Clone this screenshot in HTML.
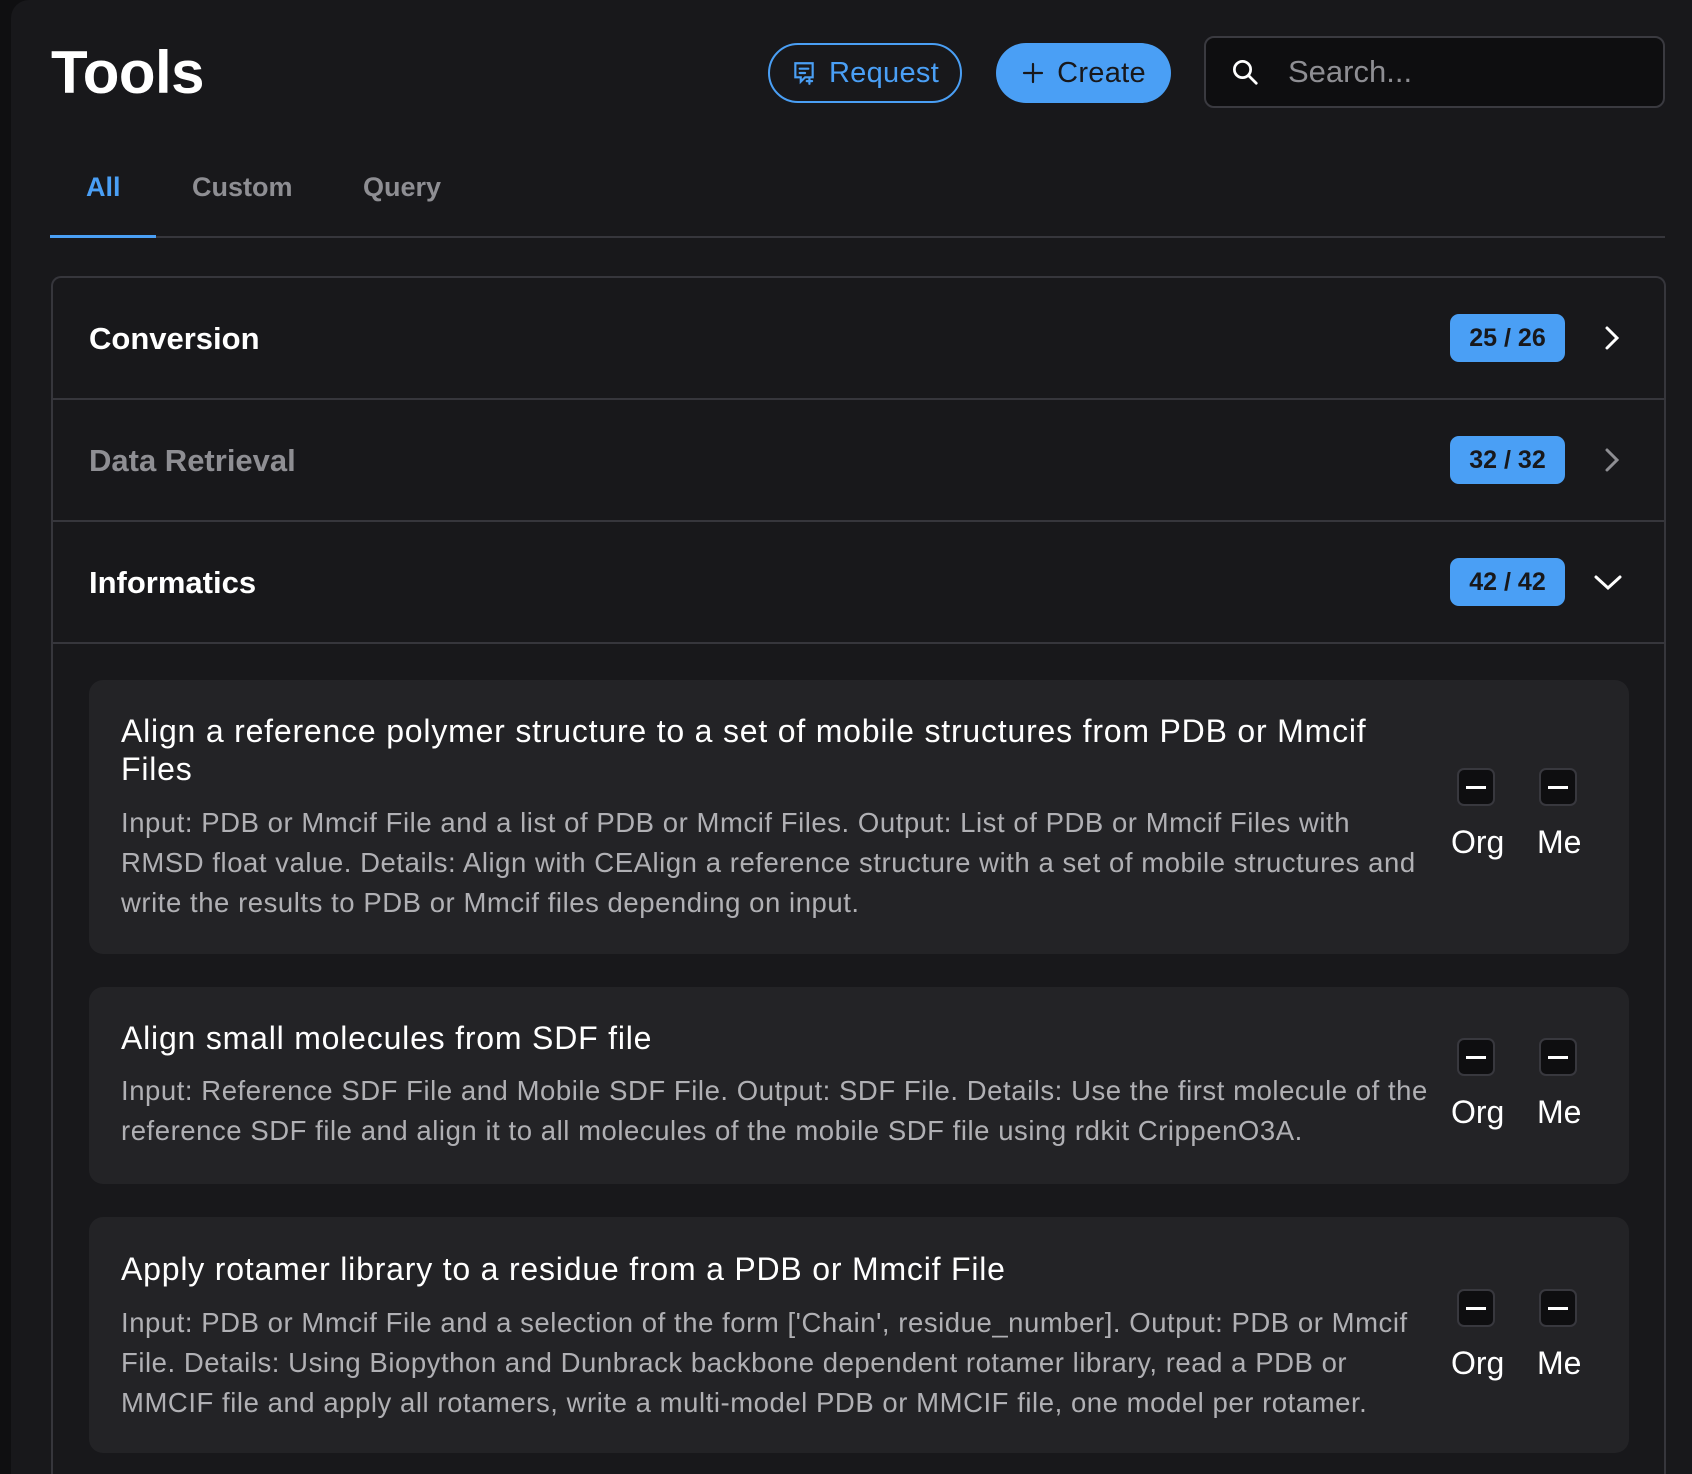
<!DOCTYPE html>
<html><head><meta charset="utf-8"><style>
*{margin:0;padding:0;box-sizing:border-box}
html,body{width:1692px;height:1474px;overflow:hidden;background:#0f0f11;font-family:"Liberation Sans",Arial,sans-serif}
.main{position:absolute;left:11px;top:0;width:1681px;height:1474px;background:#18181b;border-radius:18px 0 0 0;overflow:hidden}
.abs{position:absolute}
h1{position:absolute;left:51px;top:38px;font-size:60px;font-weight:bold;color:#fff;letter-spacing:-0.5px}
.btn{position:absolute;top:43px;height:60px;border-radius:30px;display:flex;align-items:center;justify-content:center;font-size:29px;gap:12px;letter-spacing:0.3px}
.req{left:768px;width:194px;border:2px solid #4a9ff5;color:#4a9ff5}
.cre{left:996px;width:175px;background:#4a9ff5;color:#18181b}
.search{position:absolute;left:1204px;top:36px;width:461px;height:72px;background:#0e0e10;border:2px solid #3a3a40;border-radius:10px;display:flex;align-items:center;padding-left:24px;gap:28px;color:#8e8e93;font-size:31px}
.tab{position:absolute;top:172px;font-size:27px;font-weight:bold;color:#8e8e93}
.panel{position:absolute;left:40px;top:276px;width:1615px;height:1250px;border:2px solid #36363c;border-radius:10px;border-bottom:none}
.row{position:absolute;left:0;width:100%;height:122px;border-bottom:2px solid #36363c}
.row .t{position:absolute;left:36px;top:43px;font-size:31px;font-weight:bold;color:#fff}
.badge{position:absolute;left:1397px;top:36px;width:115px;height:48px;background:#4a9ff5;border-radius:9px;color:#18181b;font-weight:bold;font-size:25px;display:flex;align-items:center;justify-content:center}
.chev{position:absolute;left:1544px;top:42px}
.card{position:absolute;left:36px;width:1540px;background:#232326;border-radius:14px}
.card .ti{position:absolute;left:32px;font-size:32px;letter-spacing:0.8px;color:#fff;line-height:38px;width:1250px}
.card .d{position:absolute;left:32px;font-size:27.5px;letter-spacing:0.55px;color:#b0b0b4;line-height:40px;width:1318px}
.cb{position:absolute;width:38px;height:38px;background:#0e0e10;border:2px solid #38383e;border-radius:7px}
.cb:after{content:"";position:absolute;left:7px;right:7px;top:16px;height:3px;background:#fff}
.lb{position:absolute;font-size:32px;color:#fff}
</style></head><body>
<div class="main">
<h1 style="left:40px">Tools</h1>
<div class="btn req" style="left:757px"><svg width="26" height="26" viewBox="0 0 24 24" fill="none" stroke="#4a9ff5" stroke-width="2" stroke-linecap="round"><path d="M4 3h16v13h-7l-4 4v-4H4z"/><path d="M8 8h8M8 12h5M17 17v5M14.5 19.5h5"/></svg>Request</div>
<div class="btn cre" style="left:985px"><svg width="24" height="24" viewBox="0 0 24 24" stroke="#18181b" stroke-width="2.2" stroke-linecap="round"><path d="M12 3v18M3 12h18"/></svg>Create</div>
<div class="search" style="left:1193px"><svg width="30" height="30" viewBox="0 0 24 24" fill="none" stroke="#fff" stroke-width="2.2" stroke-linecap="round"><circle cx="10" cy="10" r="6.5"/><path d="M15 15l6 6"/></svg>Search...</div>
<div class="tab" style="left:75px;color:#4a9ff5">All</div>
<div class="tab" style="left:181px">Custom</div>
<div class="tab" style="left:352px">Query</div>
<div class="abs" style="left:39px;top:236px;width:1615px;height:2px;background:#36363c"></div>
<div class="abs" style="left:39px;top:235px;width:106px;height:3px;background:#4a9ff5"></div>
<div class="panel">
 <div class="row" style="top:0"><div class="t">Conversion</div><div class="badge">25 / 26</div><svg class="chev" width="30" height="36" viewBox="0 0 30 36" fill="none" stroke="#fff" stroke-width="3" stroke-linecap="round"><path d="M10 8l10 10-10 10"/></svg></div>
 <div class="row" style="top:122px"><div class="t" style="color:#8e8e93">Data Retrieval</div><div class="badge">32 / 32</div><svg class="chev" width="30" height="36" viewBox="0 0 30 36" fill="none" stroke="#8e8e93" stroke-width="3" stroke-linecap="round"><path d="M10 8l10 10-10 10"/></svg></div>
 <div class="row" style="top:244px"><div class="t">Informatics</div><div class="badge">42 / 42</div><svg class="chev" width="36" height="36" viewBox="0 0 36 36" fill="none" stroke="#fff" stroke-width="3" stroke-linecap="round" style="left:1537px"><path d="M6 13l12 11 12-11"/></svg></div>
 <div class="card" style="top:402px;height:274px">
  <div class="ti" style="top:32px">Align a reference polymer structure to a set of mobile structures from PDB or Mmcif Files</div>
  <div class="d" style="top:123px">Input: PDB or Mmcif File and a list of PDB or Mmcif Files. Output: List of PDB or Mmcif Files with RMSD float value. Details: Align with CEAlign a reference structure with a set of mobile structures and write the results to PDB or Mmcif files depending on input.</div>
  <div class="cb" style="left:1368px;top:88px"></div><div class="cb" style="left:1450px;top:88px"></div>
  <div class="lb" style="left:1362px;top:144px">Org</div><div class="lb" style="left:1448px;top:144px">Me</div>
 </div>
 <div class="card" style="top:709px;height:197px">
  <div class="ti" style="top:32px">Align small molecules from SDF file</div>
  <div class="d" style="top:84px">Input: Reference SDF File and Mobile SDF File. Output: SDF File. Details: Use the first molecule of the reference SDF file and align it to all molecules of the mobile SDF file using rdkit CrippenO3A.</div>
  <div class="cb" style="left:1368px;top:51px"></div><div class="cb" style="left:1450px;top:51px"></div>
  <div class="lb" style="left:1362px;top:107px">Org</div><div class="lb" style="left:1448px;top:107px">Me</div>
 </div>
 <div class="card" style="top:939px;height:236px">
  <div class="ti" style="top:33px">Apply rotamer library to a residue from a PDB or Mmcif File</div>
  <div class="d" style="top:86px">Input: PDB or Mmcif File and a selection of the form ['Chain', residue_number]. Output: PDB or Mmcif File. Details: Using Biopython and Dunbrack backbone dependent rotamer library, read a PDB or MMCIF file and apply all rotamers, write a multi-model PDB or MMCIF file, one model per rotamer.</div>
  <div class="cb" style="left:1368px;top:72px"></div><div class="cb" style="left:1450px;top:72px"></div>
  <div class="lb" style="left:1362px;top:128px">Org</div><div class="lb" style="left:1448px;top:128px">Me</div>
 </div>
</div>
</div>
</body></html>
